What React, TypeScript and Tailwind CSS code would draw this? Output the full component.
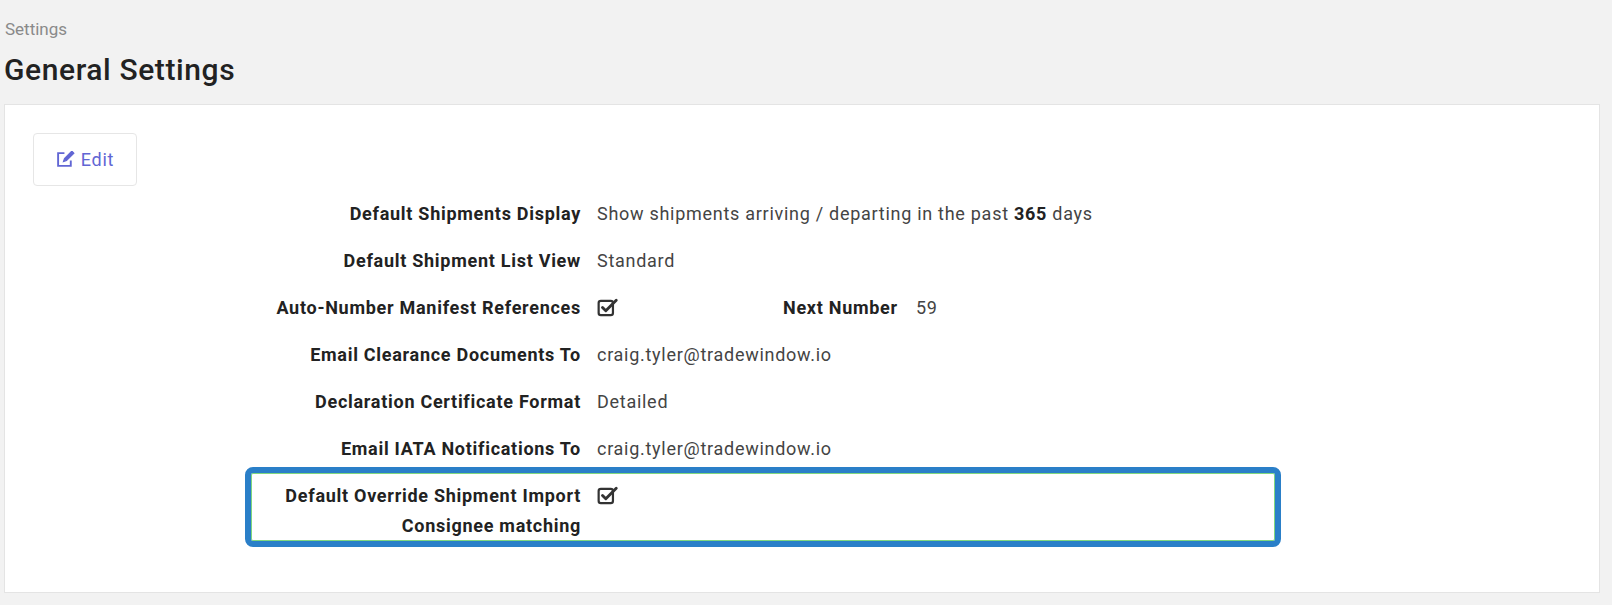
import React from "react";

const Check = () => (
  <svg width="22" height="20" viewBox="0 0 20 18" fill="none">
    <rect x="1.5" y="2.5" width="13" height="13" rx="2" stroke="#333" strokeWidth="2" />
    <path d="M5 8.5l3 3L17.5 2" stroke="#333" strokeWidth="2.6" strokeLinecap="round" strokeLinejoin="round" />
  </svg>
);

const rows: [string, React.ReactNode][] = [
  ["Default Shipments Display", <span>Show shipments arriving / departing in the past <b className="font-bold text-[#222]">365</b> days</span>],
  ["Default Shipment List View", "Standard"],
  ["Auto-Number Manifest References", <span className="flex items-center"><Check /><span className="ml-[164px] font-bold text-[#222]">Next Number</span><span className="ml-[18px]">59</span></span>],
  ["Email Clearance Documents To", "craig.tyler@tradewindow.io"],
  ["Declaration Certificate Format", "Detailed"],
  ["Email IATA Notifications To", "craig.tyler@tradewindow.io"],
];

export default function App() {
  return (
    <div className="w-[1612px] h-[605px] overflow-hidden bg-[#f2f2f2] text-[18px] tracking-[0.04em] text-[#444]" style={{ fontFamily: "Roboto, 'Liberation Sans', sans-serif" }}>
      <div className="pl-[5px] pt-[16px] text-[#8a8a8a] text-[17px] tracking-normal leading-[26px]">Settings</div>
      <div className="pl-[4px] pt-[8px] text-[30px] tracking-[0.02em] font-medium text-[#222] leading-[40px]">General Settings</div>
      <div className="ml-[4px] mt-[14px] w-[1596px] bg-white border border-[#e4e4e4] pt-[28px] pb-[45px]">
        <div className="ml-[28px] w-[104px] h-[53px] border border-[#e6e6e6] rounded flex items-center justify-center gap-1.5 text-[#6166d4]">
          <svg width="19" height="17" viewBox="0 0 18 16" fill="none" stroke="#6166d4" strokeWidth="1.8">
            <path d="M8 2H2v12h12V9" />
            <path d="M7 10l1-3 7-7 2 2-7 7z" fill="#6166d4" strokeWidth="1" />
          </svg>
          <span>Edit</span>
        </div>
        <div className="mt-[4px]">
          {rows.map(([l, v]) => (
            <div key={l} className="flex items-center h-[47px] gap-4">
              <div className="w-[576px] text-right font-bold text-[#222]">{l}</div>
              <div>{v}</div>
            </div>
          ))}
        </div>
        <div className="ml-[240px] -mt-[5px] w-[1036px] h-[80px] border-[6px] border-[#2a7fc8] rounded-lg shadow-[inset_0_0_0_1px_#7fd77f] flex gap-4 pt-[8px]">
          <div className="w-[330px] text-right font-bold text-[#222] leading-[30px]">Default Override Shipment Import<br />Consignee matching</div>
          <div className="pt-[5px]"><Check /></div>
        </div>
      </div>
    </div>
  );
}
